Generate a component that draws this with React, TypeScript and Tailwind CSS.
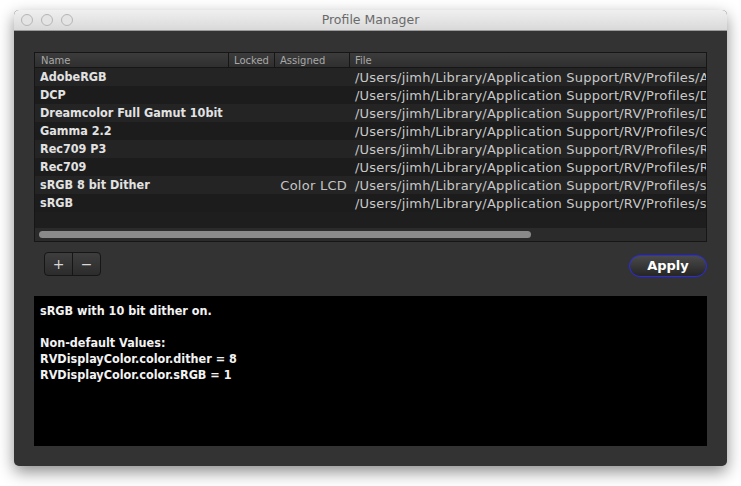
const rows = [
  { name: "AdobeRGB", assigned: "", file: "/Users/jimh/Library/Application Support/RV/Profiles/AdobeRGB.profile" },
  { name: "DCP", assigned: "", file: "/Users/jimh/Library/Application Support/RV/Profiles/DCP.profile" },
  { name: "Dreamcolor Full Gamut 10bit", assigned: "", file: "/Users/jimh/Library/Application Support/RV/Profiles/Dreamcolor.profile" },
  { name: "Gamma 2.2", assigned: "", file: "/Users/jimh/Library/Application Support/RV/Profiles/Gamma22.profile" },
  { name: "Rec709 P3", assigned: "", file: "/Users/jimh/Library/Application Support/RV/Profiles/Rec709P3.profile" },
  { name: "Rec709", assigned: "", file: "/Users/jimh/Library/Application Support/RV/Profiles/Rec709.profile" },
  { name: "sRGB 8 bit Dither", assigned: "Color LCD", file: "/Users/jimh/Library/Application Support/RV/Profiles/sRGB8.profile" },
  { name: "sRGB", assigned: "", file: "/Users/jimh/Library/Application Support/RV/Profiles/sRGB.profile" },
];

const App = () => {
  return (
    <div
      className="w-[741px] h-[486px] bg-white pl-[14px] pt-[10px] overflow-hidden"
      style={{ fontFamily: '"Lucida Grande", "DejaVu Sans", sans-serif' }}
    >
      <div className="w-[713px] h-[456px] rounded-[5px] bg-[#333333] flex flex-col overflow-hidden shadow-[0_6px_16px_rgba(0,0,0,0.45)]">
        {/* title bar */}
        <div className="relative h-[21px] shrink-0 bg-gradient-to-b from-[#f0f0f0] to-[#d9d9d9] border-b border-[#9a9a9a] flex items-center justify-center">
          <div className="absolute left-[7px] top-[4px] flex gap-[8px]">
            <span className="w-[12px] h-[12px] rounded-full border border-[#b5b5b5] bg-[#e4e4e4]" />
            <span className="w-[12px] h-[12px] rounded-full border border-[#b5b5b5] bg-[#e4e4e4]" />
            <span className="w-[12px] h-[12px] rounded-full border border-[#b5b5b5] bg-[#e4e4e4]" />
          </div>
          <span className="text-[12.5px] text-[#6a6a6a]">Profile Manager</span>
        </div>

        <div className="flex-1 flex flex-col px-[20px] pt-[21px] pb-[20px]">
          {/* table */}
          <div className="h-[190px] shrink-0 border border-[#161616] bg-[#1e1e1e] flex flex-col overflow-hidden">
            <div className="h-[15px] shrink-0 flex bg-gradient-to-b from-[#3c3c3c] to-[#2f2f2f] border-b border-[#161616] text-[10px] text-[#a8a8a8] leading-[15px]">
              <div className="w-[194px] pl-[6px] border-r border-[#161616]">Name</div>
              <div className="w-[46px] pl-[5px] border-r border-[#161616]">Locked</div>
              <div className="w-[75px] pl-[5px] border-r border-[#161616]">Assigned</div>
              <div className="flex-1 pl-[5px]">File</div>
            </div>
            <div className="flex flex-col">
              {rows.map((r, i) => (
                <div
                  key={r.name}
                  className={`h-[18px] pt-[1px] flex items-center whitespace-nowrap ${
                    i % 2 === 0 ? "bg-[#242424]" : "bg-[#1c1c1c]"
                  }`}
                >
                  <div className="w-[195px] pl-[5px] text-[12.5px] font-bold font-stretch-semi-condensed text-[#e2e2e2] overflow-hidden">{r.name}</div>
                  <div className="w-[46px]" />
                  <div className="w-[78px] pr-[7px] text-right text-[13px] tracking-[0.25px] text-[#c4c4c4]">{r.assigned}</div>
                  <div className="flex-1 pl-[1px] overflow-hidden text-[13px] tracking-[0.22px] text-[#c8c8c8]">{r.file}</div>
                </div>
              ))}
            </div>
            <div className="flex-1" />
            <div className="h-[13px] shrink-0 bg-[#2b2b2b] flex items-center px-[4px]">
              <div className="w-[492px] h-[7px] rounded-full bg-[#8a8a8a]" />
            </div>
          </div>

          {/* buttons */}
          <div className="h-[54px] shrink-0 flex items-start justify-between">
            <div className="ml-[10px] mt-[10px] flex h-[24px] rounded-[4px] border border-[#161616] bg-gradient-to-b from-[#3e3e3e] to-[#2c2c2c] text-[#d8d8d8] text-[14px]">
              <div className="w-[28px] flex items-center justify-center border-r border-[#161616]">+</div>
              <div className="w-[27px] flex items-center justify-center">−</div>
            </div>
            <div className="mt-[13px] w-[78px] h-[22px] rounded-full border-[1.5px] border-[#2a2aee] bg-gradient-to-b from-[#4a4a4a] to-[#262626] flex items-center justify-center text-[13px] font-bold text-white">
              Apply
            </div>
          </div>

          {/* description */}
          <div className="flex-1 bg-black px-[6px] pt-[7px] text-[12.5px] font-bold font-stretch-semi-condensed leading-[16px] text-[#f2f2f2]">
            <div>sRGB with 10 bit dither on.</div>
            <div className="h-[16px]" />
            <div>Non-default Values:</div>
            <div>RVDisplayColor.color.dither = 8</div>
            <div>RVDisplayColor.color.sRGB = 1</div>
          </div>
        </div>
      </div>
    </div>
  );
};

export default App;
